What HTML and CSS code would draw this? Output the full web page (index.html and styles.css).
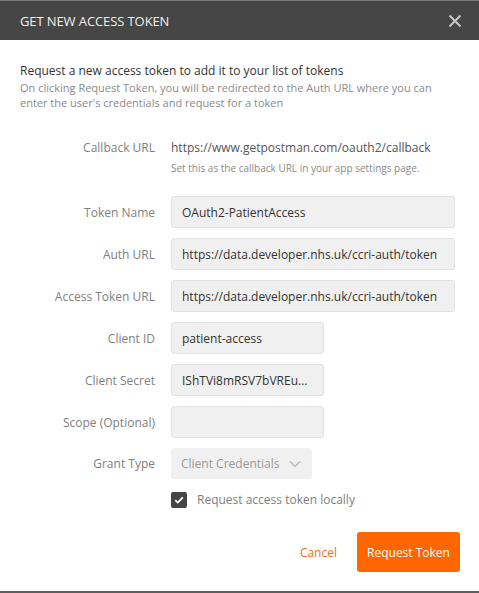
FILE: index.html
```html
<!DOCTYPE html>
<html>
<head>
<meta charset="utf-8">
<link rel="stylesheet" href="styles.css">
</head>
<body>
<div class="modal">
  <div class="header">
    <span class="title">GET NEW ACCESS TOKEN</span>
    <svg class="close" width="14" height="14" viewBox="0 0 14 14"><path d="M1.5 1.5 L12.5 12.5 M12.5 1.5 L1.5 12.5" stroke="#c8c8c8" stroke-width="2" fill="none"/></svg>
  </div>
  <div class="content">
    <div class="intro">
      <div class="intro-title">Request a new access token to add it to your list of tokens</div>
      <div class="intro-sub">On clicking Request Token, you will be redirected to the Auth URL where you can enter the user's credentials and request for a token</div>
    </div>
    <div class="form">
      <div class="row callback">
        <div class="label">Callback URL</div>
        <div class="field">
          <div class="value">https://www.getpostman.com/oauth2/callback</div>
          <div class="hint">Set this as the callback URL in your app settings page.</div>
        </div>
      </div>
      <div class="row">
        <div class="label">Token Name</div>
        <div class="field"><div class="input wide">OAuth2-PatientAccess</div></div>
      </div>
      <div class="row">
        <div class="label">Auth URL</div>
        <div class="field"><div class="input wide">https://data.developer.nhs.uk/ccri-auth/token</div></div>
      </div>
      <div class="row">
        <div class="label">Access Token URL</div>
        <div class="field"><div class="input wide">https://data.developer.nhs.uk/ccri-auth/token</div></div>
      </div>
      <div class="row">
        <div class="label">Client ID</div>
        <div class="field"><div class="input narrow">patient-access</div></div>
      </div>
      <div class="row">
        <div class="label">Client Secret</div>
        <div class="field"><div class="input narrow">IShTVi8mRSV7bVREu...</div></div>
      </div>
      <div class="row">
        <div class="label">Scope (Optional)</div>
        <div class="field"><div class="input narrow"></div></div>
      </div>
      <div class="row">
        <div class="label">Grant Type</div>
        <div class="field">
          <div class="select">
            <span>Client Credentials</span>
            <svg width="12" height="8" viewBox="0 0 12 8"><path d="M1 1.5 L6 6.5 L11 1.5" stroke="#b8b8b8" stroke-width="1.4" fill="none"/></svg>
          </div>
        </div>
      </div>
      <div class="row check-row">
        <div class="label"></div>
        <div class="field check">
          <span class="box"><svg width="10" height="8" viewBox="0 0 10 8"><path d="M1.2 4.2 L3.8 6.6 L8.8 1.4" stroke="#fff" stroke-width="1.8" fill="none"/></svg></span>
          <span class="check-label">Request access token locally</span>
        </div>
      </div>
    </div>
    <div class="actions">
      <span class="cancel">Cancel</span>
      <span class="primary">Request Token</span>
    </div>
  </div>
</div>
</body>
</html>
```

FILE: styles.css
```css
html, body {
  margin: 0;
  padding: 0;
  background: #fff;
}
body {
  font-family: "Open Sans", "Liberation Sans", sans-serif;
}
.modal {
  width: 479px;
  height: 593px;
  box-sizing: border-box;
  background: #fff;
  border-bottom: 2px solid #5e5e5e;
  display: flex;
  flex-direction: column;
}
.header {
  height: 40px;
  box-sizing: border-box;
  background: #464646;
  border-top: 1px solid #7a7a7a;
  display: flex;
  align-items: center;
  justify-content: space-between;
  padding: 0 17px 0 20px;
}
.title {
  color: #f0f0f0;
  font-size: 13px;
  letter-spacing: -0.1px;
}
.close {
  display: block;
}
.content {
  padding: 22px 19px 0 20px;
  display: flex;
  flex-direction: column;
}
.intro-title {
  font-size: 12px;
  color: #333;
  line-height: 18px;
}
.intro-sub {
  font-size: 11px;
  color: #8a8a8a;
  line-height: 15px;
  margin-top: 0;
}
.form {
  margin-top: 29px;
  display: flex;
  flex-direction: column;
  gap: 10px;
}
.row {
  display: flex;
  align-items: center;
  gap: 16px;
}
.label {
  width: 135px;
  flex: none;
  text-align: right;
  font-size: 12px;
  color: #808080;
}
.callback {
  align-items: flex-start;
  margin-bottom: 11px;
}
.value {
  font-size: 12px;
  color: #555;
  line-height: 18px;
}
.hint {
  font-size: 10px;
  color: #8a8a8a;
  margin-top: 4px;
  line-height: 14px;
}
.callback .label {
  line-height: 18px;
}
.input {
  height: 32px;
  box-sizing: border-box;
  background: #f0f0f0;
  border: 1px solid #e2e2e2;
  border-radius: 3px;
  font-size: 12px;
  color: #333;
  display: flex;
  align-items: center;
  padding: 0 10px;
  white-space: nowrap;
}
.wide {
  width: 284px;
}
.narrow {
  width: 153px;
}
.select {
  width: 141px;
  height: 31px;
  box-sizing: border-box;
  background: #f0f0f0;
  border-radius: 3px;
  display: flex;
  align-items: center;
  justify-content: space-between;
  padding: 0 11px 0 10px;
  font-size: 12px;
  color: #9a9a9a;
}
.select svg {
  display: block;
}
.check-row {
  margin-top: 2px;
}
.check {
  display: flex;
  align-items: center;
  gap: 10px;
}
.box {
  width: 16px;
  height: 16px;
  background: #454545;
  border-radius: 2px;
  display: flex;
  align-items: center;
  justify-content: center;
}
.box svg {
  display: block;
}
.check-label {
  font-size: 12px;
  color: #808080;
}
.actions {
  margin-top: 24px;
  display: flex;
  justify-content: flex-end;
  align-items: center;
  gap: 20px;
}
.cancel {
  color: #f26b1d;
  font-size: 12px;
}
.primary {
  background: #ff6600;
  color: #fff;
  font-size: 12px;
  height: 40px;
  width: 103px;
  border-radius: 3px;
  display: flex;
  align-items: center;
  justify-content: center;
}
```
